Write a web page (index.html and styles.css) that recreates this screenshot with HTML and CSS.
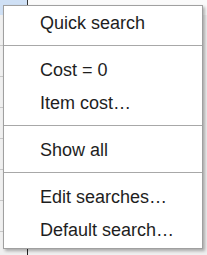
FILE: index.html
```html
<!DOCTYPE html>
<html>
<head>
<meta charset="utf-8">
<link rel="stylesheet" href="styles.css">
</head>
<body>
<div class="sheet">
  <div class="toprow"><div class="cell sel"></div><div class="cell"></div></div>
  <div class="rows">
    <div class="row"></div><div class="row"></div><div class="row"></div><div class="row"></div>
    <div class="row"></div><div class="row"></div><div class="row"></div><div class="row"></div>
  </div>
</div>
<div class="menu">
  <div class="item">Quick search</div>
  <div class="sep"></div>
  <div class="item">Cost = 0</div>
  <div class="item">Item cost…</div>
  <div class="sep"></div>
  <div class="item">Show all</div>
  <div class="sep"></div>
  <div class="item">Edit searches…</div>
  <div class="item">Default search…</div>
</div>
</body>
</html>
```
FILE: styles.css
```css
html, body {
  margin: 0;
  padding: 0;
}
body {
  width: 207px;
  height: 255px;
  overflow: hidden;
  background: #f0f0f0;
  position: relative;
  font-family: "Liberation Sans", Arial, sans-serif;
}
.sheet {
  width: 207px;
  height: 255px;
}
.toprow {
  display: flex;
  height: 15px;
}
.toprow .cell {
  width: 27px;
  border-right: 1px solid #333;
  background: #fafafa;
}
.toprow .cell.sel {
  background: #cfe0f5;
}
.toprow .cell:last-child {
  flex: 1;
  border-right: 0;
}
.rows {
  width: 27px;
  border-right: 1px solid #222;
}
.row {
  height: 30px;
  border-bottom: 1px solid #c8c8c8;
}
.menu {
  position: absolute;
  left: 3px;
  top: 5px;
  width: 198px;
  background: #fff;
  border: 1px solid #a0a0a0;
  box-shadow: 2px 2px 3px rgba(0, 0, 0, 0.3);
  padding: 0 0 2px;
}
.item {
  height: 32px;
  line-height: 33px;
  padding-top: 1px;
  padding-left: 36px;
  font-size: 18px;
  color: #1e1e1e;
  white-space: nowrap;
}
.sep {
  height: 1px;
  background: #a8a8a8;
  margin: 6px 0 7px;
}
```
